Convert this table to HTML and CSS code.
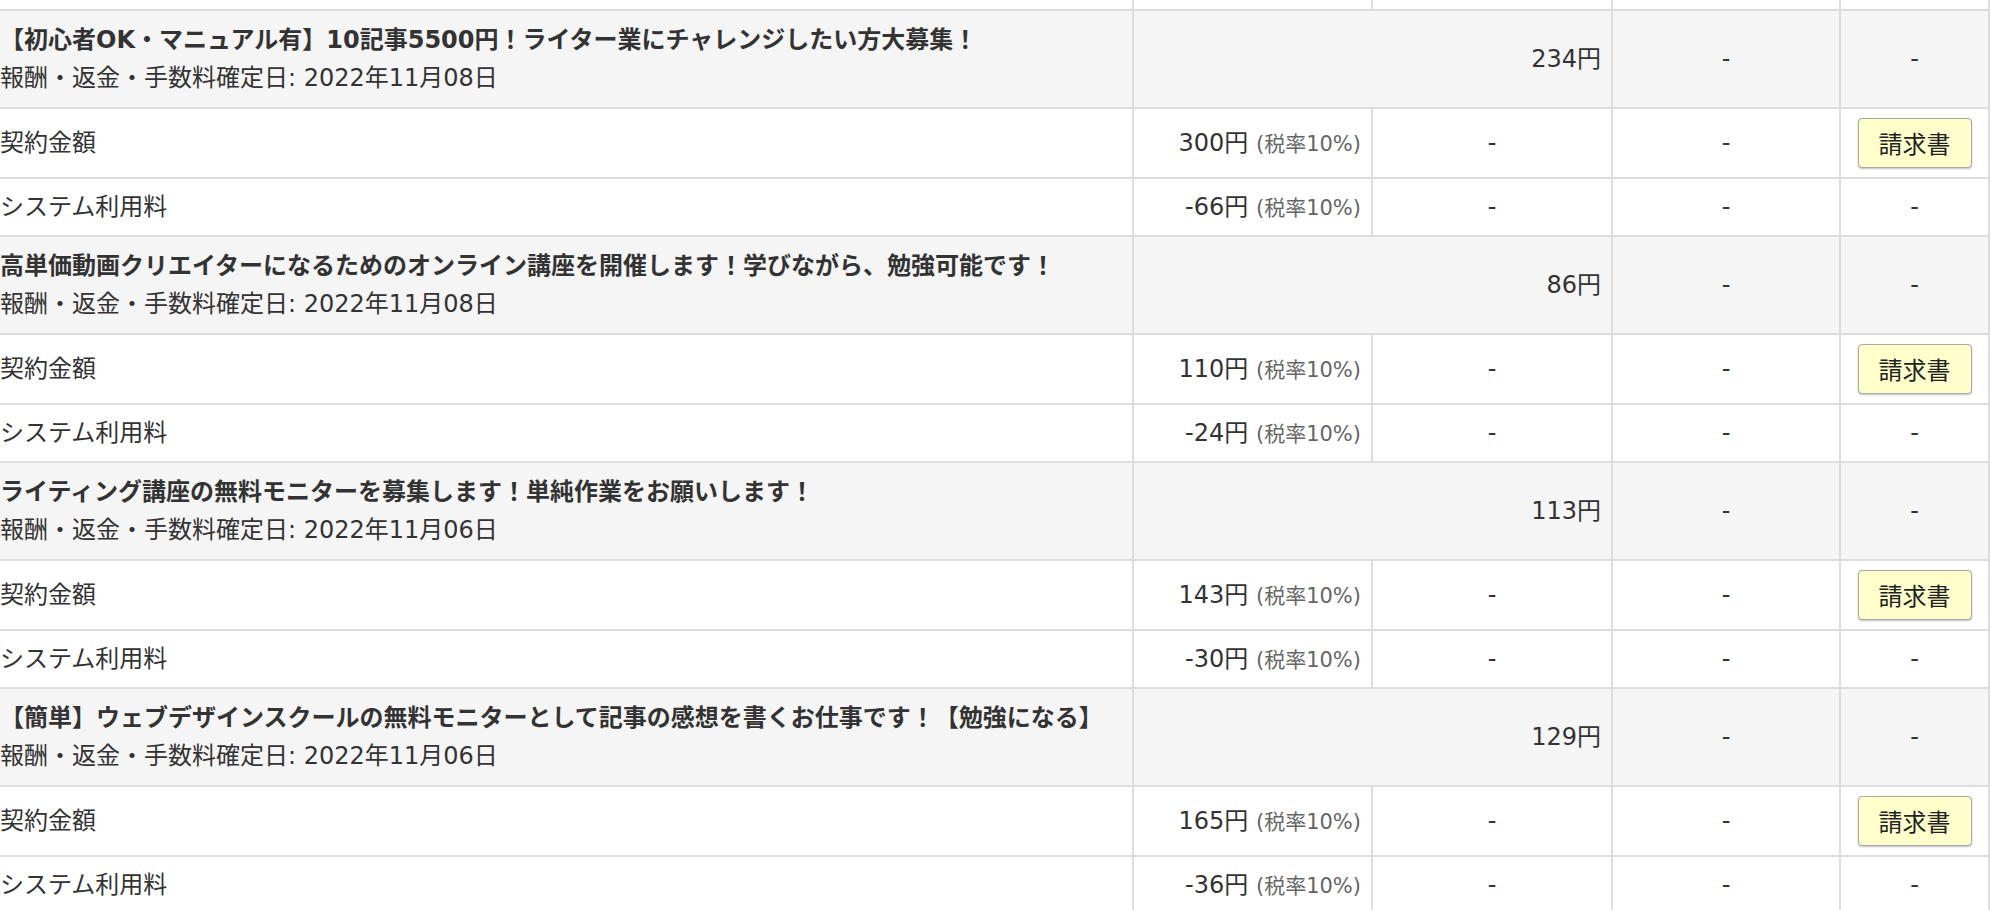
FILE: index.html
```html
<!DOCTYPE html>
<html lang="ja">
<head>
<meta charset="utf-8">
<title>報酬明細</title>
<link rel="stylesheet" href="styles.css">
</head>
<body>
<table class="ledger">
  <colgroup>
    <col class="c-name">
    <col class="c-amount">
    <col class="c-a">
    <col class="c-b">
    <col class="c-action">
  </colgroup>
  <tbody>
    <tr class="row-fee row-prev">
      <td class="name"></td>
      <td class="amount"></td>
      <td class="center"></td>
      <td class="center"></td>
      <td class="center"></td>
    </tr>

    <tr class="row-head">
      <td class="name"><div class="title">【初心者OK・マニュアル有】10記事5500円！ライター業にチャレンジしたい方大募集！</div><div class="sub">報酬・返金・手数料確定日: 2022年11月08日</div></td>
      <td class="amount" colspan="2">234円</td>
      <td class="center">-</td>
      <td class="center">-</td>
    </tr>
    <tr class="row-contract">
      <td class="name">契約金額</td>
      <td class="amount">300円 <span class="tax">(税率10%)</span></td>
      <td class="center">-</td>
      <td class="center">-</td>
      <td class="center"><button class="invoice" type="button">請求書</button></td>
    </tr>
    <tr class="row-fee">
      <td class="name">システム利用料</td>
      <td class="amount">-66円 <span class="tax">(税率10%)</span></td>
      <td class="center">-</td>
      <td class="center">-</td>
      <td class="center">-</td>
    </tr>

    <tr class="row-head">
      <td class="name"><div class="title">高単価動画クリエイターになるためのオンライン講座を開催します！学びながら、勉強可能です！</div><div class="sub">報酬・返金・手数料確定日: 2022年11月08日</div></td>
      <td class="amount" colspan="2">86円</td>
      <td class="center">-</td>
      <td class="center">-</td>
    </tr>
    <tr class="row-contract">
      <td class="name">契約金額</td>
      <td class="amount">110円 <span class="tax">(税率10%)</span></td>
      <td class="center">-</td>
      <td class="center">-</td>
      <td class="center"><button class="invoice" type="button">請求書</button></td>
    </tr>
    <tr class="row-fee">
      <td class="name">システム利用料</td>
      <td class="amount">-24円 <span class="tax">(税率10%)</span></td>
      <td class="center">-</td>
      <td class="center">-</td>
      <td class="center">-</td>
    </tr>

    <tr class="row-head">
      <td class="name"><div class="title">ライティング講座の無料モニターを募集します！単純作業をお願いします！</div><div class="sub">報酬・返金・手数料確定日: 2022年11月06日</div></td>
      <td class="amount" colspan="2">113円</td>
      <td class="center">-</td>
      <td class="center">-</td>
    </tr>
    <tr class="row-contract">
      <td class="name">契約金額</td>
      <td class="amount">143円 <span class="tax">(税率10%)</span></td>
      <td class="center">-</td>
      <td class="center">-</td>
      <td class="center"><button class="invoice" type="button">請求書</button></td>
    </tr>
    <tr class="row-fee">
      <td class="name">システム利用料</td>
      <td class="amount">-30円 <span class="tax">(税率10%)</span></td>
      <td class="center">-</td>
      <td class="center">-</td>
      <td class="center">-</td>
    </tr>

    <tr class="row-head">
      <td class="name"><div class="title">【簡単】ウェブデザインスクールの無料モニターとして記事の感想を書くお仕事です！【勉強になる】</div><div class="sub">報酬・返金・手数料確定日: 2022年11月06日</div></td>
      <td class="amount" colspan="2">129円</td>
      <td class="center">-</td>
      <td class="center">-</td>
    </tr>
    <tr class="row-contract">
      <td class="name">契約金額</td>
      <td class="amount">165円 <span class="tax">(税率10%)</span></td>
      <td class="center">-</td>
      <td class="center">-</td>
      <td class="center"><button class="invoice" type="button">請求書</button></td>
    </tr>
    <tr class="row-fee">
      <td class="name">システム利用料</td>
      <td class="amount">-36円 <span class="tax">(税率10%)</span></td>
      <td class="center">-</td>
      <td class="center">-</td>
      <td class="center">-</td>
    </tr>
  </tbody>
</table>
</body>
</html>
```

FILE: styles.css
```css
html, body {
  margin: 0;
  padding: 0;
  background: #ffffff;
}

body {
  font-family: "DejaVu Sans", "Noto Sans CJK JP", sans-serif;
  font-size: 24px;
  color: #333333;
  overflow: hidden;
}

.ledger {
  border-collapse: collapse;
  table-layout: fixed;
  width: 2002px;
  margin: -49px 0 0 -12px;
}

.c-name { width: 1144px; }
.c-amount { width: 239px; }
.c-a { width: 240px; }
.c-b { width: 228px; }
.c-action { width: 149px; }

.ledger td {
  border: 2px solid #dddddd;
  padding: 10px;
  height: 36px;
  vertical-align: middle;
  line-height: 36px;
  white-space: nowrap;
}

.row-head td {
  background: #f5f5f5;
}

.row-head .title,
.row-head .sub {
  line-height: 38px;
}

.title {
  font-weight: 700;
}

.row-contract td {
  padding-top: 9px;
  padding-bottom: 9px;
}

.amount {
  text-align: right;
}

.center {
  text-align: center;
}

.tax {
  font-size: 21px;
  line-height: 20px;
  color: #666666;
}

.invoice {
  display: inline-block;
  vertical-align: middle;
  width: 114px;
  height: 50px;
  padding: 0;
  font-family: "Noto Sans CJK JP", sans-serif;
  font-size: 24px;
  line-height: 30px;
  color: #222222;
  background: #ffffcc;
  border: 1px solid #a8a8a8;
  border-radius: 4px;
  box-shadow: 0 1px 2px rgba(0, 0, 0, 0.25);
}
```
